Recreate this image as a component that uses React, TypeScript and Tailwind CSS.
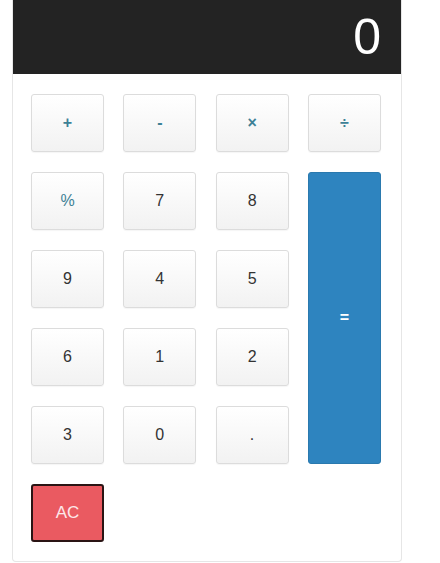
const ops = ["+", "-", "×", "÷"];

function Key({ label, op, className = "" }: { label: string; op?: boolean; className?: string }) {
  return (
    <button
      className={`flex h-[58px] items-center justify-center rounded-[3px] border border-[#dcdcdc] bg-gradient-to-b from-white to-[#f2f2f2] text-[16px] shadow-[0_1px_1px_rgba(0,0,0,0.04)] ${op ? "text-[#3d8196]" : "text-[#333]"} ${className}`}
    >
      {label}
    </button>
  );
}

export default function App() {
  return (
    <div className="min-h-screen bg-white font-['Liberation_Sans',Arial,sans-serif]">
      <div className="ml-[12px] w-[390px] overflow-hidden rounded-b-[4px] border-x border-b border-[#e6e6e6]">
        <div className="flex h-[74px] items-center justify-end bg-[#232323] pr-[20px] text-[50px] leading-none text-white">
          0
        </div>
        <div className="grid grid-cols-[73px_73px_73px_73px] grid-rows-[58px_58px_58px_58px_58px_58px] gap-x-[19.3px] gap-y-[20px] pb-[19px] pl-[18px] pt-[20px]">
          {ops.map((o) => (
            <Key key={o} label={o} op className="font-bold" />
          ))}
          <Key label="%" op />
          <Key label="7" />
          <Key label="8" />
          <button className="col-start-4 row-span-4 row-start-2 flex items-center justify-center rounded-[3px] border border-[#2a79ae] bg-[#2e84bf] text-[16px] font-bold text-white">
            =
          </button>
          <Key label="9" />
          <Key label="4" />
          <Key label="5" />
          <Key label="6" />
          <Key label="1" />
          <Key label="2" />
          <Key label="3" />
          <Key label="0" />
          <Key label="." />
          <button className="flex h-[58px] items-center justify-center rounded-[3px] border-2 border-[#2a1414] bg-[#ea5a61] text-[17px] text-[#fde8ea]">
            AC
          </button>
        </div>
      </div>
    </div>
  );
}
